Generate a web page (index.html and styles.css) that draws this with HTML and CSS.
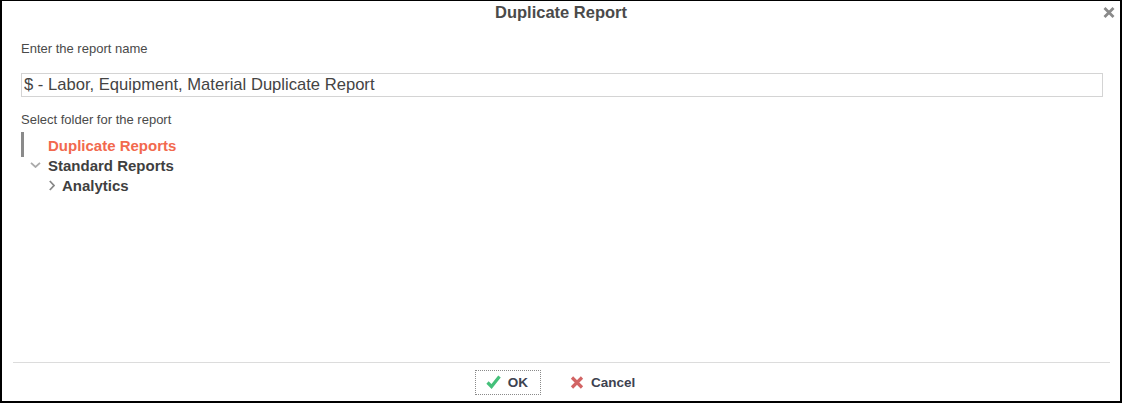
FILE: index.html
```html
<!DOCTYPE html>
<html lang="en">
<head>
    <meta charset="UTF-8">
    <meta name="viewport" content="width=device-width, initial-scale=1.0">
    <title>Duplicate Report</title>
    <link rel="stylesheet" href="styles.css">
</head>
<body>
    <div class="dialog">
        <div class="dialog-header">
            Duplicate Report
            <button class="close-button" title="Close">
                <svg width="12" height="11" viewBox="0 0 12 11"><path d="M1.5 1 L10.5 10 M10.5 1 L1.5 10" stroke="#8a8a8a" stroke-width="2.8" fill="none"/></svg>
            </button>
        </div>

        <div class="dialog-body">
            <p class="field-label">Enter the report name</p>
            <input class="report-name" type="text" value="$ - Labor, Equipment, Material Duplicate Report">

            <p class="field-label folder-label">Select folder for the report</p>
            <ul class="tree">
                <li class="tree-row selected">
                    <span class="toggle"></span>
                    <span class="node-name">Duplicate Reports</span>
                </li>
                <li class="tree-row">
                    <span class="toggle">
                        <svg width="11" height="6" viewBox="0 0 11 6"><path d="M1 0.8 L5.5 5 L10 0.8" stroke="#aaa" stroke-width="1.8" fill="none"/></svg>
                    </span>
                    <span class="node-name">Standard Reports</span>
                </li>
                <li class="tree-row level-1">
                    <span class="toggle">
                        <svg width="6" height="11" viewBox="0 0 6 11"><path d="M0.8 1 L5 5.5 L0.8 10" stroke="#888" stroke-width="1.8" fill="none"/></svg>
                    </span>
                    <span class="node-name">Analytics</span>
                </li>
            </ul>
        </div>

        <div class="dialog-footer">
            <button class="footer-button ok-button">
                <svg width="15" height="14" viewBox="0 0 15 14"><path d="M1.5 7.5 L5.5 11.5 L13.5 1.5" stroke="#45c07a" stroke-width="3.2" fill="none"/></svg>
                OK
            </button>
            <button class="footer-button">
                <svg width="14" height="13" viewBox="0 0 14 13"><path d="M2 1.5 L12 11.5 M12 1.5 L2 11.5" stroke="#d26464" stroke-width="3.2" fill="none"/></svg>
                Cancel
            </button>
        </div>
    </div>
</body>
</html>
```

FILE: styles.css
```css
body {
    margin: 0;
    padding: 0;
    font-family: "Liberation Sans", Arial, sans-serif;
    color: #444;
    background-color: #fff;
}

.dialog {
    box-sizing: border-box;
    height: 100vh;
    border: 2px solid #000;
    border-top-width: 1px;
    display: flex;
    flex-direction: column;
    position: relative;
}

.dialog-header {
    height: 24px;
    line-height: 23px;
    text-align: center;
    font-size: 16.5px;
    font-weight: bold;
    color: #4a4a4a;
}

.close-button {
    position: absolute;
    top: 6px;
    right: 5px;
    border: none;
    background: none;
    padding: 0;
    width: 12px;
    height: 11px;
    cursor: pointer;
    display: flex;
}

.dialog-body {
    flex: 1;
    padding: 0 17px 0 19px;
}

.field-label {
    margin: 17px 0 0 0;
    font-size: 13px;
    line-height: 14px;
    color: #4a4a4a;
}

.report-name {
    display: block;
    box-sizing: border-box;
    width: 100%;
    height: 24px;
    margin-top: 17px;
    padding: 0 2px;
    border: 1px solid #d4d4d4;
    font-family: "Liberation Sans", Arial, sans-serif;
    font-size: 16.6px;
    color: #444;
    outline: none;
}

.folder-label {
    margin-top: 16px;
}

.tree {
    list-style: none;
    margin: 8px 0 0 0;
    padding: 0;
}

.tree-row {
    display: flex;
    align-items: center;
    height: 20px;
    font-size: 15px;
    font-weight: bold;
    color: #3f3f3f;
    position: relative;
}

.tree-row .toggle {
    width: 27px;
    padding-left: 9px;
    box-sizing: border-box;
    display: flex;
    align-items: center;
}

.tree-row.level-1 {
    padding-left: 27px;
}

.tree-row.level-1 .toggle {
    width: 14px;
    padding-left: 1px;
}

.tree-row.selected .node-name {
    color: #f2694e;
}

/* selection marker */
.tree-row.selected::before {
    content: "";
    position: absolute;
    left: 0;
    top: -3px;
    width: 3px;
    height: 25px;
    background-color: #8a8a8a;
}

.dialog-footer {
    height: 38px;
    margin: 0 10px 0 11px;
    border-top: 1px solid #dcdcdc;
    display: flex;
    justify-content: center;
    align-items: center;
    gap: 18px;
}

.footer-button {
    display: flex;
    align-items: center;
    gap: 7px;
    height: 25px;
    padding: 0 12px 0 10px;
    border: 1px solid transparent;
    background: none;
    font-family: "Liberation Sans", Arial, sans-serif;
    font-size: 13.5px;
    font-weight: bold;
    color: #3d4250;
    cursor: pointer;
}

.ok-button {
    border: 1px dotted #8a8a8a;
}
```
